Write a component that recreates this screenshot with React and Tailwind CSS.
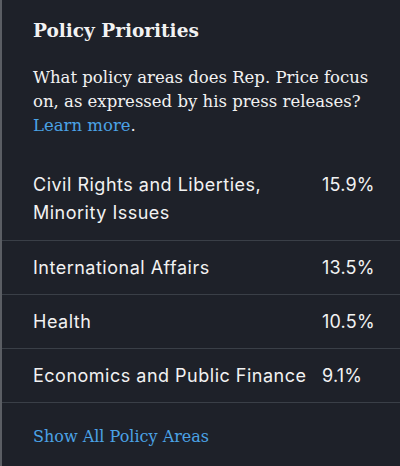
import React from 'react';

const areas = [
  { name: 'Civil Rights and Liberties, Minority Issues', pct: '15.9%' },
  { name: 'International Affairs', pct: '13.5%' },
  { name: 'Health', pct: '10.5%' },
  { name: 'Economics and Public Finance', pct: '9.1%' },
];

const serif = { fontFamily: '"DejaVu Serif", serif' };

export default function App() {
  return (
    <div className="w-[400px] h-[466px] bg-[#1e2129] border-l-2 border-[#5b5e64] text-[#f2f2f2] overflow-hidden">
      <div className="px-[31px] pt-[19px]">
        <h2 className="text-[18.5px] font-bold leading-6" style={serif}>
          Policy Priorities
        </h2>
        <p className="mt-[23px] text-[16.5px] leading-6" style={serif}>
          What policy areas does Rep. Price focus on, as expressed by his press releases?{' '}
          <a className="text-[#4ba3e6]">Learn more</a>.
        </p>
      </div>
      <ul className="mt-[20px]" style={{ fontFamily: 'Inter, sans-serif' }}>
        {areas.map((a, i) => (
          <li
            key={a.name}
            className={
              'flex pl-[31px] pr-[20px] text-[18px] tracking-[0.5px] leading-7 ' +
              (i > 0 ? 'border-t border-[#3a3f47] pt-[13px] pb-[12px]' : 'pt-[13px] pb-[13px]')
            }
          >
            <span className="flex-1 pr-2">{a.name}</span>
            <span className="w-[58px] shrink-0 tracking-[0.2px]">{a.pct}</span>
          </li>
        ))}
      </ul>
      <div className="border-t border-[#3a3f47] px-[31px] pt-[21px]">
        <a className="text-[#4ba3e6] text-[16px]" style={serif}>
          Show All Policy Areas
        </a>
      </div>
    </div>
  );
}
